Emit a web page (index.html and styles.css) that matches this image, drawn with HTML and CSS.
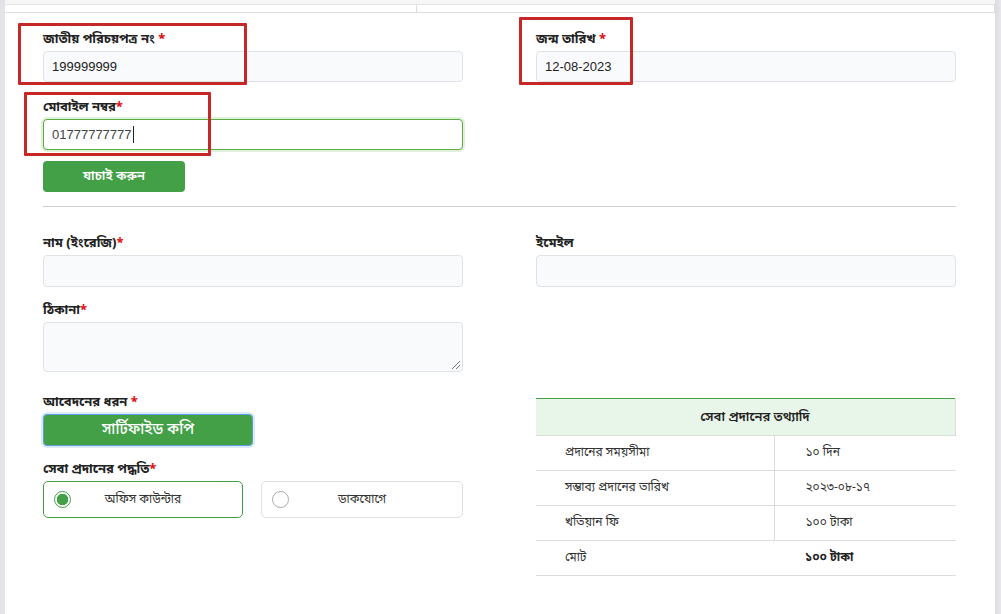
FILE: index.html
```html
<!DOCTYPE html>
<html lang="bn">
<head>
<meta charset="utf-8">
<title>সেবা আবেদন</title>
<link rel="stylesheet" href="styles.css">
</head>
<body>
<div class="page">
  <div class="gutter-left"></div>
  <div class="card">
    <div class="topbar"><div class="topcell"></div><div class="topcell last"></div></div>
    <form class="form">
      <div class="grid">
        <div class="col">
          <label class="lbl">জাতীয় পরিচয়পত্র নং <span class="req">*</span></label>
          <div class="input">199999999</div>
          <label class="lbl gap-m">মোবাইল নম্বর<span class="req">*</span></label>
          <div class="input focus">01777777777<span class="caret"></span></div>
          <button type="button" class="btn verify">যাচাই করুন</button>
        </div>
        <div class="col">
          <label class="lbl">জন্ম তারিখ <span class="req">*</span></label>
          <div class="input">12-08-2023</div>
        </div>
      </div>
      <hr class="divider">
      <div class="grid lower">
        <div class="col">
          <label class="lbl">নাম (ইংরেজি)<span class="req">*</span></label>
          <div class="input tall"></div>
          <label class="lbl gap">ঠিকানা<span class="req">*</span></label>
          <div class="textarea"><span class="grip"></span></div>
          <label class="lbl gap2">আবেদনের ধরন <span class="req">*</span></label>
          <button type="button" class="btn type">সার্টিফাইড কপি</button>
          <label class="lbl gap">সেবা প্রদানের পদ্ধতি<span class="req">*</span></label>
          <div class="radios">
            <div class="radio on"><span class="dot"></span><span class="rtext">অফিস কাউন্টার</span></div>
            <div class="radio"><span class="dot"></span><span class="rtext">ডাকযোগে</span></div>
          </div>
        </div>
        <div class="col">
          <label class="lbl">ইমেইল</label>
          <div class="input tall"></div>
          <table class="info">
            <thead><tr><th colspan="2">সেবা প্রদানের তথ্যাদি</th></tr></thead>
            <tbody>
              <tr><td class="k">প্রদানের সময়সীমা</td><td class="v">১০ দিন</td></tr>
              <tr><td class="k">সম্ভাব্য প্রদানের তারিখ</td><td class="v">২০২৩-০৮-১৭</td></tr>
              <tr><td class="k">খতিয়ান ফি</td><td class="v">১০০ টাকা</td></tr>
              <tr class="total"><td class="k">মোট</td><td class="v"><b>১০০ টাকা</b></td></tr>
            </tbody>
          </table>
        </div>
      </div>
    </form>
  </div>
  <div class="gutter-right"></div>

  <div class="mark m1"></div>
  <div class="mark m2"></div>
  <div class="mark m3"></div>
</div>
</body>
</html>
```
FILE: styles.css
```css
* { box-sizing: border-box; }
html, body { margin: 0; padding: 0; }
body {
  background: #f6f6f6;
  font-family: "Noto Sans Bengali", "Noto Serif Bengali", "Lohit Bengali", "FreeSans", "Liberation Sans", "Noto Sans", sans-serif;
  color: #222;
  font-size: 14px;
}
.page {
  position: relative;
  display: flex;
  width: 1001px;
  height: 614px;
  overflow: hidden;
}
.gutter-left { width: 5px; background: #e4e4e8; }
.gutter-right { width: 6px; background: linear-gradient(to right, #dcdce0, #e8e8ec); }
.card {
  flex: 1;
  background: #fff;
  display: flex;
  flex-direction: column;
}
.topbar {
  height: 13px;
  background: #f6f6f6;
  padding-top: 4px;
  display: grid;
  grid-template-columns: 412px 1fr;
}
.topcell {
  background: #fff;
  border-top: 1px solid #e4e4e4;
  border-bottom: 1px solid #dcdcdc;
  border-right: 1px solid #dcdcdc;
}
.form { padding: 17px 34px 0 38px; }
.grid {
  display: grid;
  grid-template-columns: 420px 420px;
  column-gap: 73px;
}
.col { display: flex; flex-direction: column; align-items: flex-start; }
.lbl {
  font-weight: 700;
  font-size: 13px;
  line-height: 20px;
  height: 20px;
  margin-bottom: 1px;
  color: #222;
}
.lbl.gap-m { margin-top: 16px; }
.lbl.gap { margin-top: 14px; }
.lbl.gap2 { margin-top: 21px; }
.req { color: #e01010; }
.input {
  width: 420px;
  height: 31px;
  border: 1px solid #dfe2e6;
  border-radius: 4px;
  background: #f9fafc;
  padding: 0 8px;
  display: flex;
  align-items: center;
  font-family: "Liberation Sans", Arial, sans-serif;
  font-size: 13px;
  color: #222;
}
.input.tall { height: 32px; }
.input.focus {
  background: #fff;
  border-color: #5aac3c;
  box-shadow: 0 0 0 2px rgba(90, 172, 60, 0.18);
  color: #444;
}
.caret { display: inline-block; width: 1px; height: 17px; background: #222; margin-left: 1px; }
.btn {
  border: none;
  background: #43a047;
  color: #fff;
  border-radius: 4px;
  font-family: inherit;
  cursor: pointer;
}
.btn.verify {
  margin-top: 11px;
  width: 142px;
  height: 31px;
  font-size: 13px;
  font-weight: 600;
}
.divider {
  border: none;
  border-top: 1px solid #cfcfcf;
  margin: 14px 0 0 0;
  width: 913px;
}
.lower { margin-top: 27px; }
.textarea {
  position: relative;
  width: 420px;
  height: 50px;
  border: 1px solid #dfe2e6;
  border-radius: 4px;
  background: #f9fafc;
}
.grip {
  position: absolute;
  right: 2px;
  bottom: 2px;
  width: 8px;
  height: 8px;
  background: linear-gradient(135deg, transparent 45%, #777 46%, #777 52%, transparent 53%, transparent 70%, #777 71%, #777 77%, transparent 78%);
}
.btn.type {
  width: 210px;
  height: 32px;
  font-size: 15px;
  font-weight: 500;
  border: 1px solid #5e9de0;
  box-shadow: 0 0 0 2px rgba(120, 170, 235, 0.25);
}
.radios { display: flex; gap: 18px; }
.radio {
  width: 200px;
  height: 37px;
  border: 1px solid #e0e0e0;
  border-radius: 5px;
  display: grid;
  grid-template-columns: 18px 1fr 18px;
  align-items: center;
  padding: 0 10px;
  font-size: 12px;
  color: #333;
}
.radio + .radio { width: 202px; }
.radio.on { border-color: #43a047; }
.dot {
  width: 17px;
  height: 17px;
  border-radius: 50%;
  border: 1px solid #aaa;
  background: #fff;
}
.radio.on .dot {
  border: 1.5px solid #43a047;
  background: radial-gradient(circle, #43a047 0 5.5px, #fff 6px);
}
.rtext { text-align: center; }
.info {
  margin-top: 111px;
  width: 420px;
  border-collapse: collapse;
  font-size: 12px;
  color: #333;
}
.info th {
  height: 37px;
  background: #e8f5e9;
  border-top: 1px solid #43a047;
  border-right: 1px solid #dcdcdc;
  border-bottom: 1px solid #dcdcdc;
  padding-left: 20px;
  font-weight: 600;
  font-size: 13px;
  color: #222;
}
.info td {
  height: 35px;
  border-bottom: 1px solid #dcdcdc;
}
.info td.k { width: 238px; padding-left: 29px; border-right: 1px solid #dcdcdc; }
.info td.v { padding-left: 31px; }
.info tr.total td.k { border-right: none; }
.info b { font-weight: 700; color: #222; }

.mark {
  position: absolute;
  border: 3px solid #c62828;
  border-radius: 1px;
  pointer-events: none;
}
.m1 { left: 18px; top: 23px; width: 229px; height: 62px; }
.m2 { left: 519px; top: 17px; width: 114px; height: 68px; }
.m3 { left: 24px; top: 92px; width: 187px; height: 64px; }
```
